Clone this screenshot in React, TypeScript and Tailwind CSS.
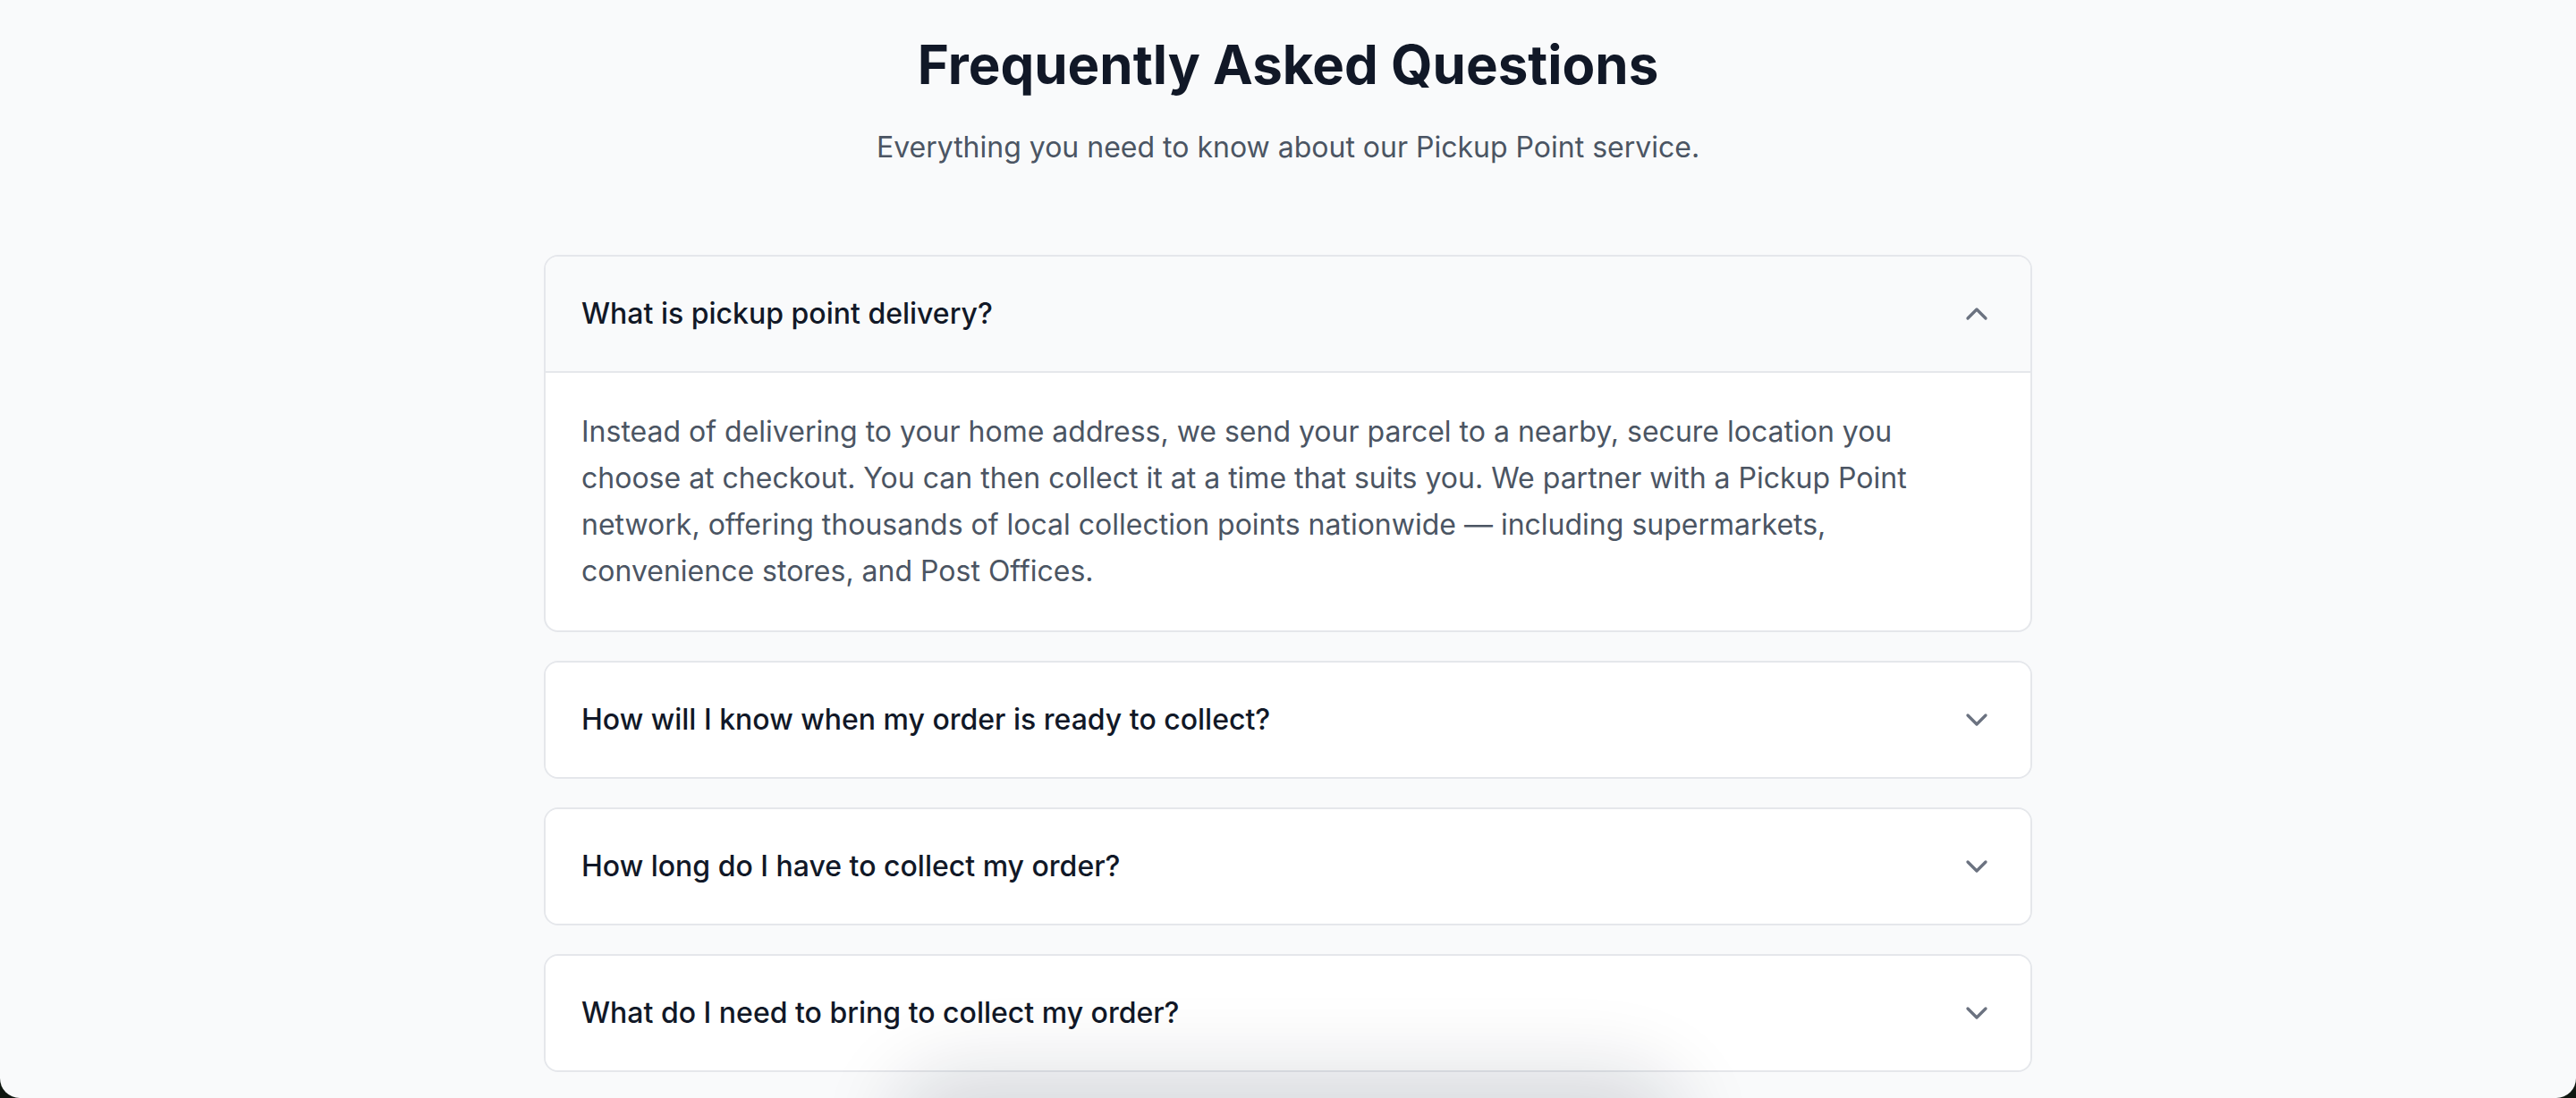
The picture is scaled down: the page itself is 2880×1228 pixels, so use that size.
import React, { useState } from 'react';
import { ChevronDown, ChevronUp } from 'lucide-react';

type Faq = { q: string; a: string };

const FAQS: Faq[] = [
  {
    q: 'What is pickup point delivery?',
    a: 'Instead of delivering to your home address, we send your parcel to a nearby, secure location you choose at checkout. You can then collect it at a time that suits you. We partner with a Pickup Point network, offering thousands of local collection points nationwide \u2014 including supermarkets, convenience stores, and Post Offices.',
  },
  {
    q: 'How will I know when my order is ready to collect?',
    a: "We'll send you an email and text message as soon as your parcel arrives at your chosen Pickup Point, along with your collection code.",
  },
  {
    q: 'How long do I have to collect my order?',
    a: 'Parcels are held for 7 days from the day they arrive. After that they are returned to us and your order is refunded.',
  },
  {
    q: 'What do I need to bring to collect my order?',
    a: 'Bring your collection code from the notification and a form of photo ID that matches the name on the order.',
  },
];

const FaqItem = ({ item, open, onToggle }: { item: Faq; open: boolean; onToggle: () => void }) => (
  <div className="overflow-hidden rounded-[16px] border-2 border-[#e5e7eb] bg-white">
    <button
      type="button"
      onClick={onToggle}
      className={`flex w-full items-center justify-between px-[40px] py-[40px] text-left ${open ? 'bg-[#f9fafb]' : 'bg-white'}`}
    >
      <span className="text-[32px] leading-[48px] font-medium text-[#111827]">{item.q}</span>
      {open ? (
        <ChevronUp size={40} strokeWidth={2} className="shrink-0 text-[#6b7280]" />
      ) : (
        <ChevronDown size={40} strokeWidth={2} className="shrink-0 text-[#6b7280]" />
      )}
    </button>
    {open && (
      <div className="border-t-2 border-[#e5e7eb] px-[40px] py-[40px]">
        <p className="text-[32px] leading-[52px] text-[#4b5563]">{item.a}</p>
      </div>
    )}
  </div>
);

export default function App() {
  const [openIdx, setOpenIdx] = useState<number | null>(0);

  return (
    <div className="min-h-screen bg-[#f9fafb] font-['Inter',sans-serif]">
      <div className="mx-auto w-[1664px] pt-[36px] pb-[32px]">
        <h2 className="text-center text-[60px] leading-[72px] font-bold text-[#111827]">
          Frequently Asked Questions
        </h2>
        <p className="mt-[33px] text-center text-[32px] leading-[48px] text-[#4b5563]">
          Everything you need to know about our Pickup Point service.
        </p>

        <div className="mt-[96px] flex flex-col gap-[32px]">
          {FAQS.map((item, i) => (
            <FaqItem
              key={item.q}
              item={item}
              open={openIdx === i}
              onToggle={() => setOpenIdx(openIdx === i ? null : i)}
            />
          ))}
        </div>
      </div>

      <div className="pointer-events-none fixed bottom-0 left-1/2 h-[80px] w-[820px] -translate-x-1/2 translate-y-full rounded-[40px] bg-white shadow-[0_0_90px_30px_rgba(17,24,39,0.14)]" />

      {/* window frame corners */}
      <div className="pointer-events-none fixed inset-0 rounded-b-[22px] shadow-[0_0_0_40px_#0f1710]" />
    </div>
  );
}
